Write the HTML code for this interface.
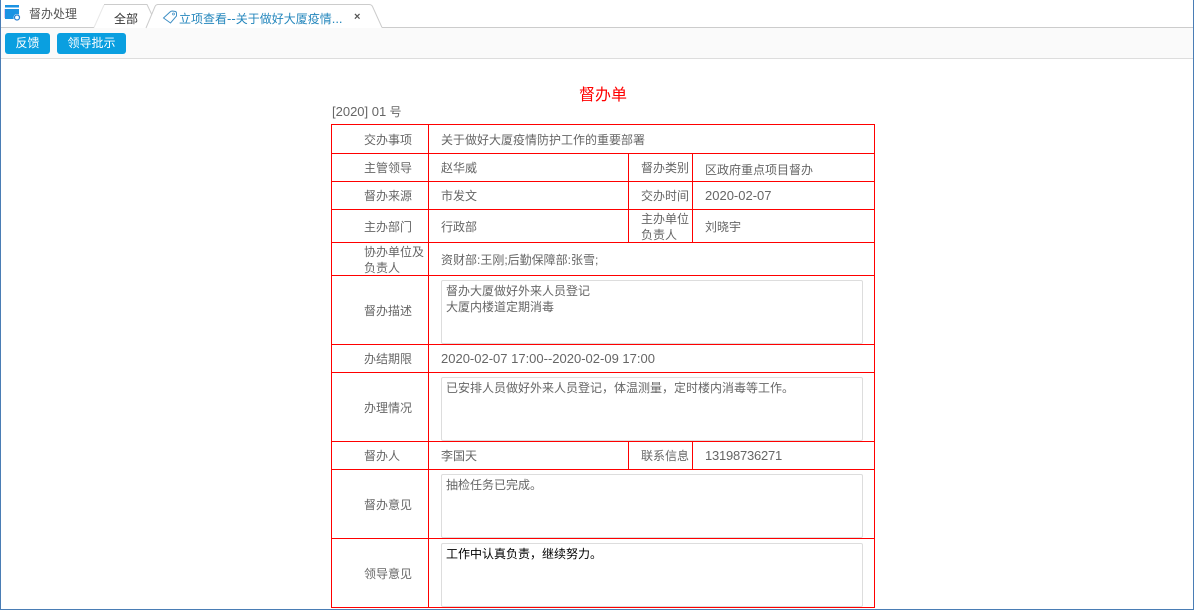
<!DOCTYPE html>
<html><head><meta charset="utf-8">
<style>
html,body{margin:0;padding:0;width:1194px;height:610px;overflow:hidden;background:#fff}
body{position:relative;font-family:"Liberation Sans","Noto Sans CJK SC",sans-serif;font-size:12px;color:#666}
.a{position:absolute}
.t{position:absolute;white-space:nowrap;line-height:16px}
.t i{font-style:normal;font-size:13px}
.h{position:absolute;background:#f00;height:1px}
.v{position:absolute;background:#f00;width:1px}
.ta{position:absolute;left:441px;width:420px;height:62px;border:1px solid #ddd;border-radius:2px;background:#fff}
.btn{position:absolute;top:33px;height:21px;background:#0a9fe0;border-radius:3px;color:#fff;text-align:center;line-height:21px;font-size:12px}
</style></head>
<body>
<div class="a" style="left:0;top:0;width:1px;height:610px;background:#4a7db5"></div>
<div class="a" style="right:0;top:0;width:1px;height:610px;background:#4a7db5"></div>
<div class="a" style="left:0;top:609px;width:1194px;height:1px;background:#4a7db5"></div>
<div class="a" style="left:1px;top:28px;width:1192px;height:30px;background:#fafafa"></div>
<div class="a" style="left:1px;top:27px;width:1192px;height:1px;background:#ccc"></div>
<div class="a" style="left:1px;top:58px;width:1192px;height:1px;background:#ddd"></div>

<svg class="a" style="left:0;top:0" width="400" height="30" viewBox="0 0 400 30">
  <path d="M94 28 L104 4.500 H147 L152 15 L146 28 Z" fill="#fff"/>
  <path d="M94 27.500 L104 5" fill="none" stroke="#e8e8e8" stroke-width="1"/>
  <path d="M104 4.500 H147 L152 15" fill="none" stroke="#ccc" stroke-width="1"/>
  <path d="M146 28 L155 6.500 Q156 4.500 158 4.500 H369 Q371.500 4.500 372.500 6.500 L382 27.500 V28 Z" fill="#fff"/>
  <path d="M146 28 L155 6.500 Q156 4.500 158 4.500 H369 Q371.500 4.500 372.500 6.500 L382 27.500" fill="none" stroke="#ccc" stroke-width="1"/>
  <path d="M163.500 18 L170 12 Q171 11 172.500 11 L175.500 11.500 Q176.500 12 176.500 13 L176.500 16 L170.500 23 Z" fill="none" stroke="#3f8fc4" stroke-width="1"/>
  <circle cx="173.500" cy="14" r="1" fill="none" stroke="#3f8fc4" stroke-width=".7"/>
  <rect x="4" y="9" width="2" height="9" fill="#e6c8ee"/>
  <rect x="5" y="5" width="14" height="2.500" fill="#1c93e3"/>
  <rect x="5" y="9" width="14" height="10" fill="#1c93e3"/>
  <circle cx="17" cy="17.500" r="3.500" fill="#fff"/>
  <circle cx="17" cy="17.500" r="2.500" fill="none" stroke="#2a7fd0" stroke-width="1.200"/>
</svg>
<div class="t" style="left:29px;top:6px;color:#555">督办处理</div>
<div class="t" style="left:114px;top:11px;color:#333">全部</div>
<div class="t" style="left:179px;top:11px;color:#2587bd">立项查看<i>--</i>关于做好大厦疫情<i>...</i></div>
<div class="t" style="left:354px;top:9px;color:#555;font-size:11px;font-weight:bold">×</div>

<div class="btn" style="left:5px;width:45px">反馈</div>
<div class="btn" style="left:57px;width:69px">领导批示</div>

<div class="t" style="left:579px;top:86px;color:#f00;font-size:16px;line-height:20px">督办单</div>
<div class="t" style="left:332px;top:104px"><i>[2020] 01</i> 号</div>

<div class="h" style="left:331px;width:544px;top:124px"></div>
<div class="h" style="left:331px;width:544px;top:153px"></div>
<div class="h" style="left:331px;width:544px;top:181px"></div>
<div class="h" style="left:331px;width:544px;top:209px"></div>
<div class="h" style="left:331px;width:544px;top:242px"></div>
<div class="h" style="left:331px;width:544px;top:275px"></div>
<div class="h" style="left:331px;width:544px;top:344px"></div>
<div class="h" style="left:331px;width:544px;top:372px"></div>
<div class="h" style="left:331px;width:544px;top:441px"></div>
<div class="h" style="left:331px;width:544px;top:469px"></div>
<div class="h" style="left:331px;width:544px;top:538px"></div>
<div class="h" style="left:331px;width:544px;top:607px"></div>
<div class="v" style="left:331px;top:124px;height:484px"></div>
<div class="v" style="left:428px;top:124px;height:484px"></div>
<div class="v" style="left:874px;top:124px;height:484px"></div>
<div class="v" style="left:628px;top:153px;height:90px"></div>
<div class="v" style="left:692px;top:153px;height:90px"></div>
<div class="v" style="left:628px;top:441px;height:29px"></div>
<div class="v" style="left:692px;top:441px;height:29px"></div>

<div class="t" style="left:364px;top:132px">交办事项</div>
<div class="t" style="left:441px;top:132px">关于做好大厦疫情防护工作的重要部署</div>
<div class="t" style="left:364px;top:160px">主管领导</div>
<div class="t" style="left:441px;top:160px">赵华威</div>
<div class="t" style="left:641px;top:160px">督办类别</div>
<div class="t" style="left:705px;top:162px">区政府重点项目督办</div>
<div class="t" style="left:364px;top:188px">督办来源</div>
<div class="t" style="left:441px;top:188px">市发文</div>
<div class="t" style="left:641px;top:188px">交办时间</div>
<div class="t" style="left:705px;top:188px"><i>2020-02-07</i></div>
<div class="t" style="left:364px;top:219px">主办部门</div>
<div class="t" style="left:441px;top:219px">行政部</div>
<div class="t" style="left:641px;top:211px">主办单位<br>负责人</div>
<div class="t" style="left:705px;top:219px">刘晓宇</div>
<div class="t" style="left:364px;top:244px">协办单位及<br>负责人</div>
<div class="t" style="left:441px;top:252px">资财部:王刚;后勤保障部:张雪;</div>
<div class="t" style="left:364px;top:303px">督办描述</div>
<div class="ta" style="top:280px"></div>
<div class="t" style="left:446px;top:283px">督办大厦做好外来人员登记<br>大厦内楼道定期消毒</div>
<div class="t" style="left:364px;top:351px">办结期限</div>
<div class="t" style="left:441px;top:351px"><i>2020-02-07 17:00--2020-02-09 17:00</i></div>
<div class="t" style="left:364px;top:400px">办理情况</div>
<div class="ta" style="top:377px"></div>
<div class="t" style="left:446px;top:380px">已安排人员做好外来人员登记，体温测量，定时楼内消毒等工作。</div>
<div class="t" style="left:364px;top:448px">督办人</div>
<div class="t" style="left:441px;top:448px">李国天</div>
<div class="t" style="left:641px;top:448px">联系信息</div>
<div class="t" style="left:705px;top:448px"><i style="letter-spacing:-.23px">13198736271</i></div>
<div class="t" style="left:364px;top:497px">督办意见</div>
<div class="ta" style="top:474px"></div>
<div class="t" style="left:446px;top:477px">抽检任务已完成。</div>
<div class="t" style="left:364px;top:566px">领导意见</div>
<div class="ta" style="top:543px"></div>
<div class="t" style="left:446px;top:546px;color:#000">工作中认真负责，继续努力。</div>
</body></html>
